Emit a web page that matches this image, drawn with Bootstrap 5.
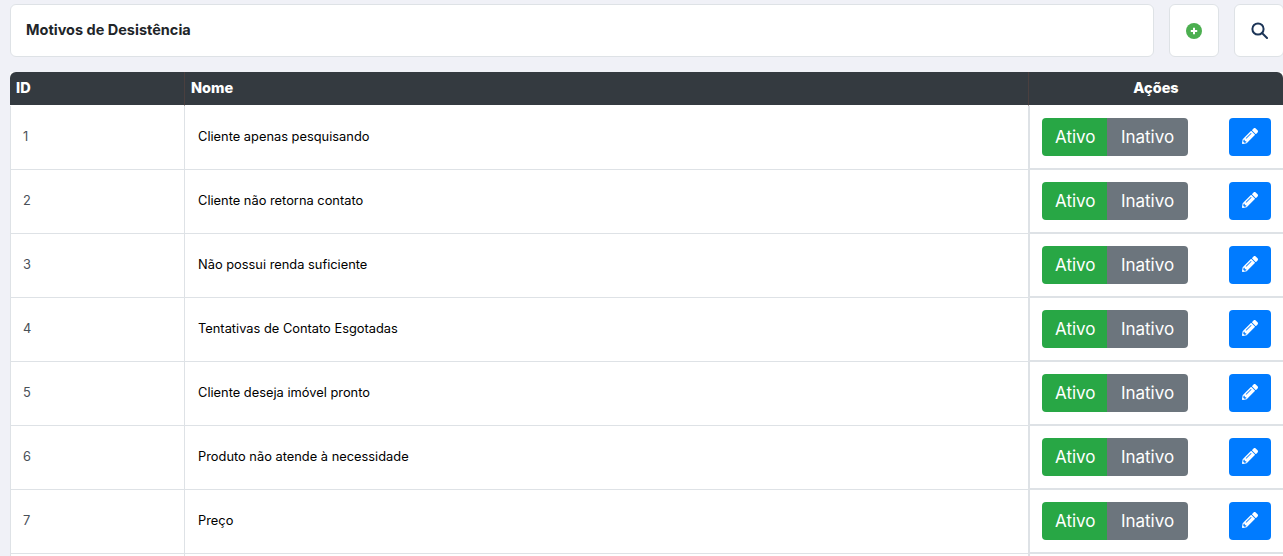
<!doctype html>
<html lang="pt-BR"><head><meta charset="utf-8">
<link href="https://cdn.jsdelivr.net/npm/bootstrap@5.3.0/dist/css/bootstrap.min.css" rel="stylesheet">
<style>
html,body{height:556px;overflow:hidden}
body{background:#f0f1f7;font-family:Inter,"Liberation Sans",sans-serif;width:1283px}
.pagewrap{padding:4px 0 0 10px;width:1300px}
.topbar{display:flex;gap:15px;height:53px}
.tcard{background:#fff;border:1px solid #dee2e6;border-radius:6px;display:flex;align-items:center;justify-content:center}
.titlecard{width:1144px;justify-content:flex-start;padding:0 0 1px 15px}
.titlecard h1{font-size:14.5px;font-weight:700;margin:0;color:#212529}
.iconcard{width:50px}
.datagrid{margin:15px 0 0;width:1273px;border-collapse:separate;border-spacing:0;table-layout:fixed;background:#fff}
.datagrid th{background:#343a40;color:#fff;font-size:14.5px;font-weight:800;height:34px;padding:0 6px 1px;border-left:1px solid #4a3f3f;border-bottom:1px solid #fff}
.datagrid th:first-child{border-left:0;border-top-left-radius:6px}
.datagrid th:last-child{border-top-right-radius:6px}
.datagrid td{height:64px;padding:0 0 2px;font-size:12.85px;vertical-align:middle;border-bottom:1px solid #dee2e6;border-left:1px solid #dee2e6;color:#000}
.datagrid td.idcell{padding-left:12px;color:#495057}
.datagrid td.namecell{padding-left:13px}
.datagrid td.actcell{border-left-width:2px;border-bottom-width:2px;padding:0 12px}
.actwrap{display:flex;justify-content:space-between;align-items:center}
.toggle .btn{font-size:17px;height:38px;padding:0 13px;line-height:38px;border:0;color:#fff;--bs-border-radius:4px;border-radius:4px}
.toggle .btn-success{background:#28a745;width:66px}
.toggle .btn-secondary{background:#6c757d;width:81px}
.editbtn{width:42px;height:38px;background:#007bff;border:0;border-radius:4px;display:flex;align-items:center;justify-content:center;padding:0}
.editbtn svg{margin-bottom:2px}
</style></head>
<body>
<svg width="0" height="0" class="d-none"><symbol id="pencil" viewBox="0 0 512 512"><path fill="#fff" d="M497.9 142.1l-46.1 46.1c-4.7 4.7-12.3 4.7-17 0l-111-111c-4.7-4.7-4.7-12.3 0-17l46.1-46.1c18.7-18.7 49.1-18.7 67.9 0l60.1 60.1c18.8 18.7 18.8 49.1 0 67.9zM284.2 99.8L21.6 362.4.4 483.9c-2.9 16.4 11.4 30.6 27.8 27.8l121.5-21.3 262.6-262.6c4.7-4.7 4.7-12.3 0-17l-111-111c-4.8-4.7-12.4-4.7-17.1 0zM124.1 339.9c-5.5-5.5-5.5-14.3 0-19.8l154-154c5.5-5.5 14.3-5.5 19.8 0s5.5 14.3 0 19.8l-154 154c-5.5 5.5-14.3 5.5-19.8 0zM88 424h48v36.3l-64.5 11.3-31.1-31.1L51.7 376H88v48z"/></symbol></svg>
<div class="pagewrap">
<div class="topbar">
<div class="tcard titlecard"><h1>Motivos de Desistência</h1></div>
<div class="tcard iconcard"><svg width="16" height="16" viewBox="0 0 16 16"><circle cx="8" cy="8" r="8" fill="#4caf50"/><path d="M8 4.8v6.4M4.8 8h6.4" stroke="#fff" stroke-width="2"/></svg></div>
<div class="tcard iconcard"><svg width="17" height="17" viewBox="0 0 17 17" fill="none" stroke="#1c3557" stroke-width="2"><circle cx="7" cy="7" r="5.6"/><path d="M11 11l5 5" stroke-linecap="round"/></svg></div>
</div>
<table class="datagrid">
<colgroup><col style="width:174px"><col style="width:844px"><col style="width:255px"></colgroup>
<thead><tr><th>ID</th><th>Nome</th><th class="text-center">Ações</th></tr></thead>
<tbody>
<tr><td class="idcell">1</td><td class="namecell">Cliente apenas pesquisando</td><td class="actcell"><div class="actwrap"><div class="btn-group toggle"><button class="btn btn-success">Ativo</button><button class="btn btn-secondary">Inativo</button></div><button class="btn editbtn"><svg width="16" height="16"><use href="#pencil"/></svg></button></div></td></tr>
<tr><td class="idcell">2</td><td class="namecell">Cliente não retorna contato</td><td class="actcell"><div class="actwrap"><div class="btn-group toggle"><button class="btn btn-success">Ativo</button><button class="btn btn-secondary">Inativo</button></div><button class="btn editbtn"><svg width="16" height="16"><use href="#pencil"/></svg></button></div></td></tr>
<tr><td class="idcell">3</td><td class="namecell">Não possui renda suficiente</td><td class="actcell"><div class="actwrap"><div class="btn-group toggle"><button class="btn btn-success">Ativo</button><button class="btn btn-secondary">Inativo</button></div><button class="btn editbtn"><svg width="16" height="16"><use href="#pencil"/></svg></button></div></td></tr>
<tr><td class="idcell">4</td><td class="namecell">Tentativas de Contato Esgotadas</td><td class="actcell"><div class="actwrap"><div class="btn-group toggle"><button class="btn btn-success">Ativo</button><button class="btn btn-secondary">Inativo</button></div><button class="btn editbtn"><svg width="16" height="16"><use href="#pencil"/></svg></button></div></td></tr>
<tr><td class="idcell">5</td><td class="namecell">Cliente deseja imóvel pronto</td><td class="actcell"><div class="actwrap"><div class="btn-group toggle"><button class="btn btn-success">Ativo</button><button class="btn btn-secondary">Inativo</button></div><button class="btn editbtn"><svg width="16" height="16"><use href="#pencil"/></svg></button></div></td></tr>
<tr><td class="idcell">6</td><td class="namecell">Produto não atende à necessidade</td><td class="actcell"><div class="actwrap"><div class="btn-group toggle"><button class="btn btn-success">Ativo</button><button class="btn btn-secondary">Inativo</button></div><button class="btn editbtn"><svg width="16" height="16"><use href="#pencil"/></svg></button></div></td></tr>
<tr><td class="idcell">7</td><td class="namecell">Preço</td><td class="actcell"><div class="actwrap"><div class="btn-group toggle"><button class="btn btn-success">Ativo</button><button class="btn btn-secondary">Inativo</button></div><button class="btn editbtn"><svg width="16" height="16"><use href="#pencil"/></svg></button></div></td></tr>
<tr><td class="idcell"></td><td class="namecell"></td><td class="actcell"></td></tr>
</tbody></table>
</div>
<script src="https://cdn.jsdelivr.net/npm/bootstrap@5.3.0/dist/js/bootstrap.bundle.min.js"></script>
</body></html>
